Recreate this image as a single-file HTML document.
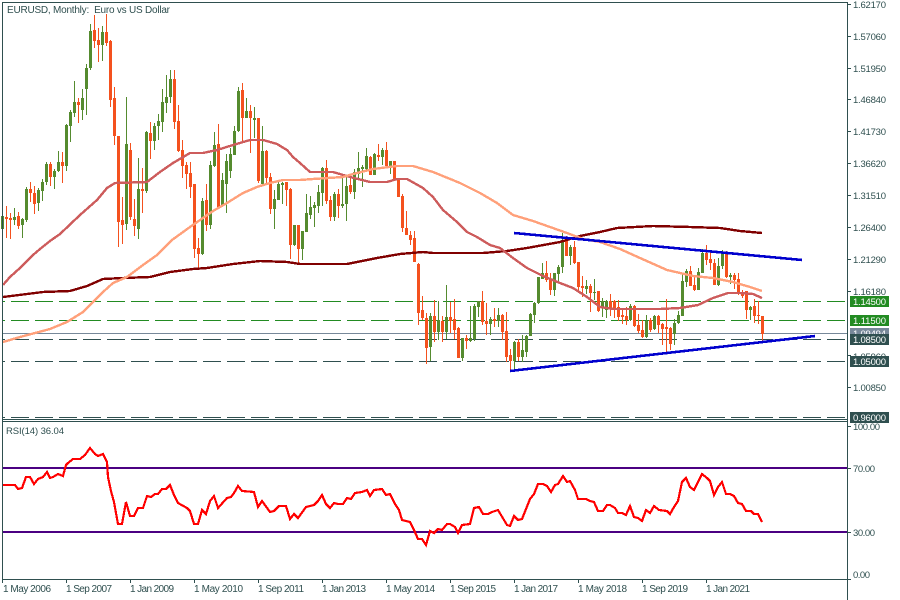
<!DOCTYPE html>
<html><head><meta charset="utf-8"><title>EURUSD, Monthly</title>
<style>html,body{margin:0;padding:0;background:#fff;width:900px;height:600px;overflow:hidden}svg{display:block}text{font-family:"Liberation Sans",sans-serif;font-size:9.5px;fill:#2F4F4F}.w{fill:#fff}.d{font-size:10px}</style></head>
<body>
<svg width="900" height="600" viewBox="0 0 900 600" xmlns="http://www.w3.org/2000/svg">
<rect width="900" height="600" fill="#fff"/>
<g shape-rendering="crispEdges">
<g fill="none" stroke-width="1" stroke-dasharray="18 6" stroke-dashoffset="16">
<path d="M3 301.5H847M3 320.5H847" stroke="#228B22"/>
<path d="M3 339.5H847M3 361.5H847M3 417.5H847" stroke="#2F4F4F"/>
</g>
<path d="M3 333.5H847" stroke="#778899" fill="none"/>
<path fill="none" stroke="#558B2F" stroke-width="1" d="M2.5 216V229M14.5 208V225M22.5 218V238M26.5 187V222M38.5 188V211M42.5 179V201M46.5 162V185M54.5 169V189M58.5 151V172M66.5 124V171M70.5 110V142M74.5 81V117M82.5 89V120M86.5 64V115M90.5 24V70M102.5 26V61M126.5 97V230M138.5 158V239M146.5 131V193M154.5 123V150M158.5 114V140M162.5 89V132M166.5 75V113M170.5 70V103M202.5 198V255M210.5 161V229M214.5 132V167M222.5 173V206M226.5 154V213M230.5 148V178M234.5 126V155M238.5 87V132M246.5 98V118M254.5 107V138M262.5 126V185M274.5 190V229M278.5 181V200M282.5 182V204M294.5 225V246M302.5 231V260M306.5 194V232M310.5 196V219M314.5 202V227M318.5 185V213M322.5 167V206M334.5 192V221M342.5 177V208M346.5 177V221M354.5 169V199M358.5 152V179M362.5 165V187M366.5 148V172M374.5 153V175M382.5 148V165M390.5 161V174M430.5 313V361M438.5 301V340M446.5 285V339M462.5 338V361M470.5 306V342M474.5 304V341M478.5 301V317M490.5 317V335M498.5 308V327M514.5 341V371M522.5 335V362M526.5 335V357M530.5 313V336M534.5 302V323M538.5 277V304M542.5 263V279M554.5 273V296M558.5 265V282M562.5 233V273M570.5 245V265M586.5 280V294M594.5 279V300M602.5 298V317M606.5 300V318M630.5 304V321M646.5 315V338M654.5 315V330M674.5 319V345M678.5 311V324M682.5 273V316M686.5 269V287M698.5 268V290M702.5 249V273M718.5 258V286M722.5 250V269M730.5 273V284M750.5 306V320"/>
<path fill="none" stroke="#558B2F" stroke-width="3" d="M2.5 216V229M14.5 217V220M22.5 219V225M26.5 189V220M38.5 190V203M42.5 182V191M46.5 164V182M54.5 171V177M58.5 162V171M66.5 125V166M70.5 112V126M74.5 102V113M82.5 98V110M86.5 68V89M90.5 31V68M102.5 32V45M126.5 144V224M138.5 189V229M146.5 132V191M154.5 126V141M158.5 121V126M162.5 102V122M166.5 97V103M170.5 79V97M202.5 201V254M210.5 165V225M214.5 145V166M222.5 180V206M226.5 161V184M230.5 154V171M234.5 131V155M238.5 91V131M246.5 111V118M254.5 118V120M262.5 151V184M274.5 199V209M278.5 184V200M282.5 183V185M294.5 225V245M302.5 231V249M306.5 213V232M310.5 207V215M314.5 205V208M318.5 192V206M322.5 168V193M334.5 194V217M342.5 204V206M346.5 186V204M354.5 172V192M358.5 168V174M362.5 167V169M366.5 156V169M374.5 154V175M382.5 150V157M390.5 161V166M430.5 316V347M438.5 320V332M446.5 317V332M462.5 338V358M470.5 338V341M474.5 306V339M478.5 301V307M490.5 319V324M498.5 315V321M514.5 342V361M522.5 350V357M526.5 336V352M530.5 314V336M534.5 303V315M538.5 277V303M542.5 273V279M554.5 273V290M558.5 267V274M562.5 240V267M570.5 247V256M586.5 286V289M594.5 292V293M602.5 301V307M606.5 301V310M630.5 306V320M646.5 321V337M654.5 316V329M674.5 323V334M678.5 315V323M682.5 281V316M686.5 271V282M698.5 272V290M702.5 253V273M718.5 266V285M722.5 253V266M730.5 275V277M750.5 307V310"/>
<path fill="none" stroke="#F4511E" stroke-width="1" d="M6.5 206V238M10.5 213V239M18.5 212V229M30.5 182V202M34.5 186V214M50.5 162V186M62.5 152V183M78.5 98V123M94.5 15V48M98.5 28V62M106.5 14V46M110.5 40V107M114.5 87V145M118.5 136V247M122.5 197V244M130.5 143V220M134.5 199V236M142.5 168V213M150.5 122V159M174.5 70V129M178.5 105V152M182.5 140V178M186.5 162V189M190.5 162V198M194.5 184V258M198.5 238V269M206.5 184V231M218.5 124V207M242.5 83V142M250.5 105V153M258.5 118V183M266.5 150V183M270.5 173V214M286.5 182V206M290.5 188V259M298.5 225V264M326.5 160V204M330.5 196V221M338.5 189V218M350.5 178V194M370.5 156V175M378.5 144V161M386.5 142V166M394.5 161V180M398.5 178V197M402.5 194V232M406.5 211V235M410.5 231V245M414.5 231V262M418.5 263V325M422.5 296V320M426.5 313V364M434.5 300V342M442.5 316V342M450.5 302V333M454.5 299V339M458.5 327V358M466.5 335V349M482.5 291V325M486.5 303V335M494.5 308V327M502.5 314V340M506.5 312V362M510.5 349V372M518.5 339V361M546.5 261V282M550.5 273V295M566.5 236V256M574.5 241V264M578.5 262V293M582.5 276V297M590.5 284V312M598.5 291V312M610.5 294V316M614.5 300V318M618.5 300V321M622.5 309V324M626.5 307V325M634.5 305V327M638.5 314V333M642.5 320V338M650.5 318V332M658.5 315V333M662.5 323V345M666.5 299V352M670.5 327V350M690.5 266V286M694.5 275V291M706.5 245V265M710.5 251V270M714.5 259V285M726.5 251V278M734.5 273V289M738.5 273V295M742.5 290V298M746.5 291V319M754.5 299V323M758.5 301V324M762.5 316V341"/>
<path fill="none" stroke="#F4511E" stroke-width="3" d="M6.5 217V219M10.5 218V220M18.5 216V226M30.5 189V193M34.5 193V204M50.5 164V177M62.5 162V166M78.5 102V105M94.5 30V41M98.5 40V45M106.5 32V43M110.5 41V100M114.5 98V136M118.5 136V222M122.5 220V225M130.5 150V217M134.5 219V226M142.5 189V191M150.5 133V141M174.5 79V122M178.5 121V151M182.5 150V166M186.5 165V174M190.5 173V187M194.5 184V249M198.5 248V254M206.5 200V225M218.5 144V207M242.5 90V118M250.5 111V118M258.5 118V181M266.5 151V178M270.5 177V209M286.5 182V190M290.5 189V245M298.5 225V249M326.5 168V201M330.5 200V217M338.5 194V206M350.5 185V192M370.5 157V175M378.5 155V157M386.5 150V166M394.5 161V180M398.5 180V197M402.5 196V228M406.5 228V235M410.5 235V240M414.5 238V262M418.5 264V313M422.5 310V318M426.5 318V348M434.5 316V332M442.5 321V332M450.5 317V321M454.5 319V330M458.5 328V358M466.5 338V341M482.5 301V322M486.5 321V324M494.5 319V321M502.5 315V332M506.5 331V357M510.5 355V361M518.5 342V357M546.5 273V280M550.5 280V290M566.5 241V256M574.5 247V263M578.5 262V287M582.5 286V288M590.5 286V293M598.5 291V311M610.5 301V308M614.5 301V308M618.5 307V317M622.5 315V317M626.5 316V320M634.5 306V326M638.5 325V331M642.5 330V337M650.5 320V330M658.5 316V325M662.5 324V329M666.5 327V329M670.5 328V344M690.5 271V286M694.5 285V290M706.5 253V260M710.5 259V263M714.5 263V285M726.5 253V277M734.5 275V280M738.5 279V294M742.5 293V296M746.5 291V310M754.5 306V316M758.5 315V316M762.5 316V334"/>
<polyline fill="none" stroke="#800000" stroke-width="2.4" points="3,297 43,292 70,291 87,286 103,279 123,278 150,277 170,272 193,269 207,268 233,264 260,261 287,262 300,264 347,264 377,258 400,254 423,252 433,253 483,253 507,251 527,248 560,242 580,236 600,232 617,228 653,226 690,227 720,228 740,231 762,233"/>
<polyline fill="none" stroke="#CD5C5C" stroke-width="2.4" points="3,285 10,277 20,268 33,255 40,249 50,241 60,234 80,215 97,200 107,188 115,183 147,182 160,172 173,163 190,153 203,153 217,150 233,145 250,140 263,140 277,144 287,150 293,157 300,163 310,172 333,172 350,177 370,182 387,182 397,179 407,179 423,188 433,197 443,210 457,222 467,232 477,237 490,245 500,248 513,258 527,268 543,276 560,283 573,288 587,297 600,307 613,309 660,309 680,308 698,305 713,298 728,293 740,293 753,294 762,298"/>
<polyline fill="none" stroke="#FFA07A" stroke-width="2.4" points="3,342 20,337 50,329 67,322 83,312 103,292 113,283 127,277 143,265 157,255 172,240 190,227 213,211 227,203 243,193 257,187 270,183 283,180 300,180 313,179 343,177 353,174 373,169 397,166 413,166 433,172 460,183 480,193 497,203 513,215 533,221 550,227 567,233 583,239 600,242 620,249 640,258 667,270 693,276 713,278 733,282 750,287 762,291"/>
<path fill="none" stroke="#0000CD" stroke-width="2.6" d="M514 233L802 260M510 371L815 336"/>
<path fill="none" stroke="#4B0082" stroke-width="2" d="M3 468H847M3 532H847"/>
<polyline fill="none" stroke="#FF0000" stroke-width="2.2" points="3,485 15,485 18,489 22,488 26,477 30,477 34,484 38,479 43,477 47,472 50,478 53,477 58,474 63,476 66,465 68,463 73,459 80,459 85,455 90,448 95,454 98,456 103,454 107,462 108,477 111,491 114,502 118,524 122,524 126,502 130,516 134,516 138,508 143,508 147,496 151,497 155,494 158,494 162,489 166,489 170,485 174,495 178,503 187,508 190,511 194,524 198,524 202,510 206,514 210,501 214,496 218,508 227,498 231,497 234,493 238,486 242,491 254,492 258,507 262,501 270,512 274,511 279,506 286,506 290,519 294,514 298,518 306,507 310,506 314,505 318,501 322,495 326,504 330,508 334,503 338,504 343,504 347,498 351,499 355,493 362,492 367,490 370,496 374,490 382,489 386,495 390,494 395,504 399,510 402,520 410,522 414,530 418,539 422,539 426,545 430,531 434,533 438,529 442,530 447,524 450,524 455,527 458,533 462,525 470,524 474,508 479,507 483,514 488,514 492,512 498,510 507,525 510,526 514,516 518,520 522,519 530,499 534,494 538,484 543,484 547,486 551,492 555,485 558,484 563,476 567,482 570,481 575,490 578,499 586,499 590,501 594,502 598,511 603,511 607,505 610,505 615,508 618,513 622,513 626,515 630,506 634,517 638,518 642,521 646,510 650,513 654,506 659,510 667,511 670,514 674,507 678,501 682,482 686,478 690,487 694,490 702,474 707,478 710,481 714,495 718,487 722,482 726,494 730,494 734,496 738,503 742,504 746,511 751,511 754,514 758,514 762,522"/>
<path fill="none" stroke="#2F4F4F" stroke-width="1" d="M2 2.5H848M2.5 2V580M847.5 2V600M2 419.5H848M2 421.5H848M2 579.5H848"/>
<path fill="none" stroke="#2F4F4F" stroke-width="1" d="M848 4.5H851M848 36.5H851M848 68.5H851M848 99.5H851M848 131.5H851M848 163.5H851M848 195.5H851M848 227.5H851M848 259.5H851M848 291.5H851M848 355.5H851M848 387.5H851M848 426.5H851M848 468.5H851M848 532.5H851M848 579.5H851M2.5 580V583M66.5 580V583M130.5 580V583M194.5 580V583M258.5 580V583M322.5 580V583M386.5 580V583M450.5 580V583M514.5 580V583M578.5 580V583M642.5 580V583M706.5 580V583"/>
</g>
<text class="d" x="7" y="13" style="white-space:pre" textLength="163" lengthAdjust="spacing">EURUSD, Monthly:  Euro vs US Dollar</text>
<text x="6" y="434" textLength="58" lengthAdjust="spacing">RSI(14) 36.04</text>
<g>
<text x="853" y="8" textLength="33" lengthAdjust="spacing">1.62170</text>
<text x="853" y="40" textLength="33" lengthAdjust="spacing">1.57060</text>
<text x="853" y="72" textLength="33" lengthAdjust="spacing">1.51950</text>
<text x="853" y="103" textLength="33" lengthAdjust="spacing">1.46840</text>
<text x="853" y="135" textLength="33" lengthAdjust="spacing">1.41730</text>
<text x="853" y="167" textLength="33" lengthAdjust="spacing">1.36620</text>
<text x="853" y="199" textLength="33" lengthAdjust="spacing">1.31510</text>
<text x="853" y="231" textLength="33" lengthAdjust="spacing">1.26400</text>
<text x="853" y="263" textLength="33" lengthAdjust="spacing">1.21290</text>
<text x="853" y="295" textLength="33" lengthAdjust="spacing">1.16180</text>
<text x="853" y="360" textLength="33" lengthAdjust="spacing">1.05960</text>
<text x="853" y="391" textLength="33" lengthAdjust="spacing">1.00850</text>
<text x="853" y="430" textLength="27" lengthAdjust="spacing">100.00</text>
<text x="853" y="472" textLength="22" lengthAdjust="spacing">70.00</text>
<text x="853" y="536" textLength="22" lengthAdjust="spacing">30.00</text>
<text x="853" y="578" textLength="17" lengthAdjust="spacing">0.00</text>
</g>
<g shape-rendering="crispEdges">
<rect x="850" y="296" width="39" height="11" fill="#228B22"/>
<rect x="850" y="315" width="39" height="11" fill="#228B22"/>
<rect x="850" y="328" width="39" height="11" fill="#778899"/>
<rect x="850" y="334" width="39" height="11" fill="#2F4F4F"/>
<rect x="850" y="356" width="39" height="11" fill="#2F4F4F"/>
<rect x="850" y="412" width="39" height="11" fill="#2F4F4F"/>
</g>
<text class="w" x="853" y="305" textLength="33" lengthAdjust="spacing">1.14500</text>
<text class="w" x="853" y="324" textLength="33" lengthAdjust="spacing">1.11500</text>
<svg x="850" y="328" width="39" height="6"><text class="w" x="3" y="9" textLength="33" lengthAdjust="spacing">1.09494</text></svg>
<text class="w" x="853" y="343" textLength="33" lengthAdjust="spacing">1.08500</text>
<text class="w" x="853" y="365" textLength="33" lengthAdjust="spacing">1.05000</text>
<text class="w" x="853" y="421" textLength="33" lengthAdjust="spacing">0.96000</text>
<g class="dates">
<text class="d" x="3" y="592" textLength="48" lengthAdjust="spacing">1 May 2006</text>
<text class="d" x="66" y="592" textLength="46" lengthAdjust="spacing">1 Sep 2007</text>
<text class="d" x="130" y="592" textLength="44" lengthAdjust="spacing">1 Jan 2009</text>
<text class="d" x="194" y="592" textLength="49" lengthAdjust="spacing">1 May 2010</text>
<text class="d" x="258" y="592" textLength="46" lengthAdjust="spacing">1 Sep 2011</text>
<text class="d" x="322" y="592" textLength="44" lengthAdjust="spacing">1 Jan 2013</text>
<text class="d" x="386" y="592" textLength="49" lengthAdjust="spacing">1 May 2014</text>
<text class="d" x="450" y="592" textLength="46" lengthAdjust="spacing">1 Sep 2015</text>
<text class="d" x="514" y="592" textLength="44" lengthAdjust="spacing">1 Jan 2017</text>
<text class="d" x="578" y="592" textLength="49" lengthAdjust="spacing">1 May 2018</text>
<text class="d" x="642" y="592" textLength="46" lengthAdjust="spacing">1 Sep 2019</text>
<text class="d" x="706" y="592" textLength="44" lengthAdjust="spacing">1 Jan 2021</text>
</g>
</svg>
</body></html>
